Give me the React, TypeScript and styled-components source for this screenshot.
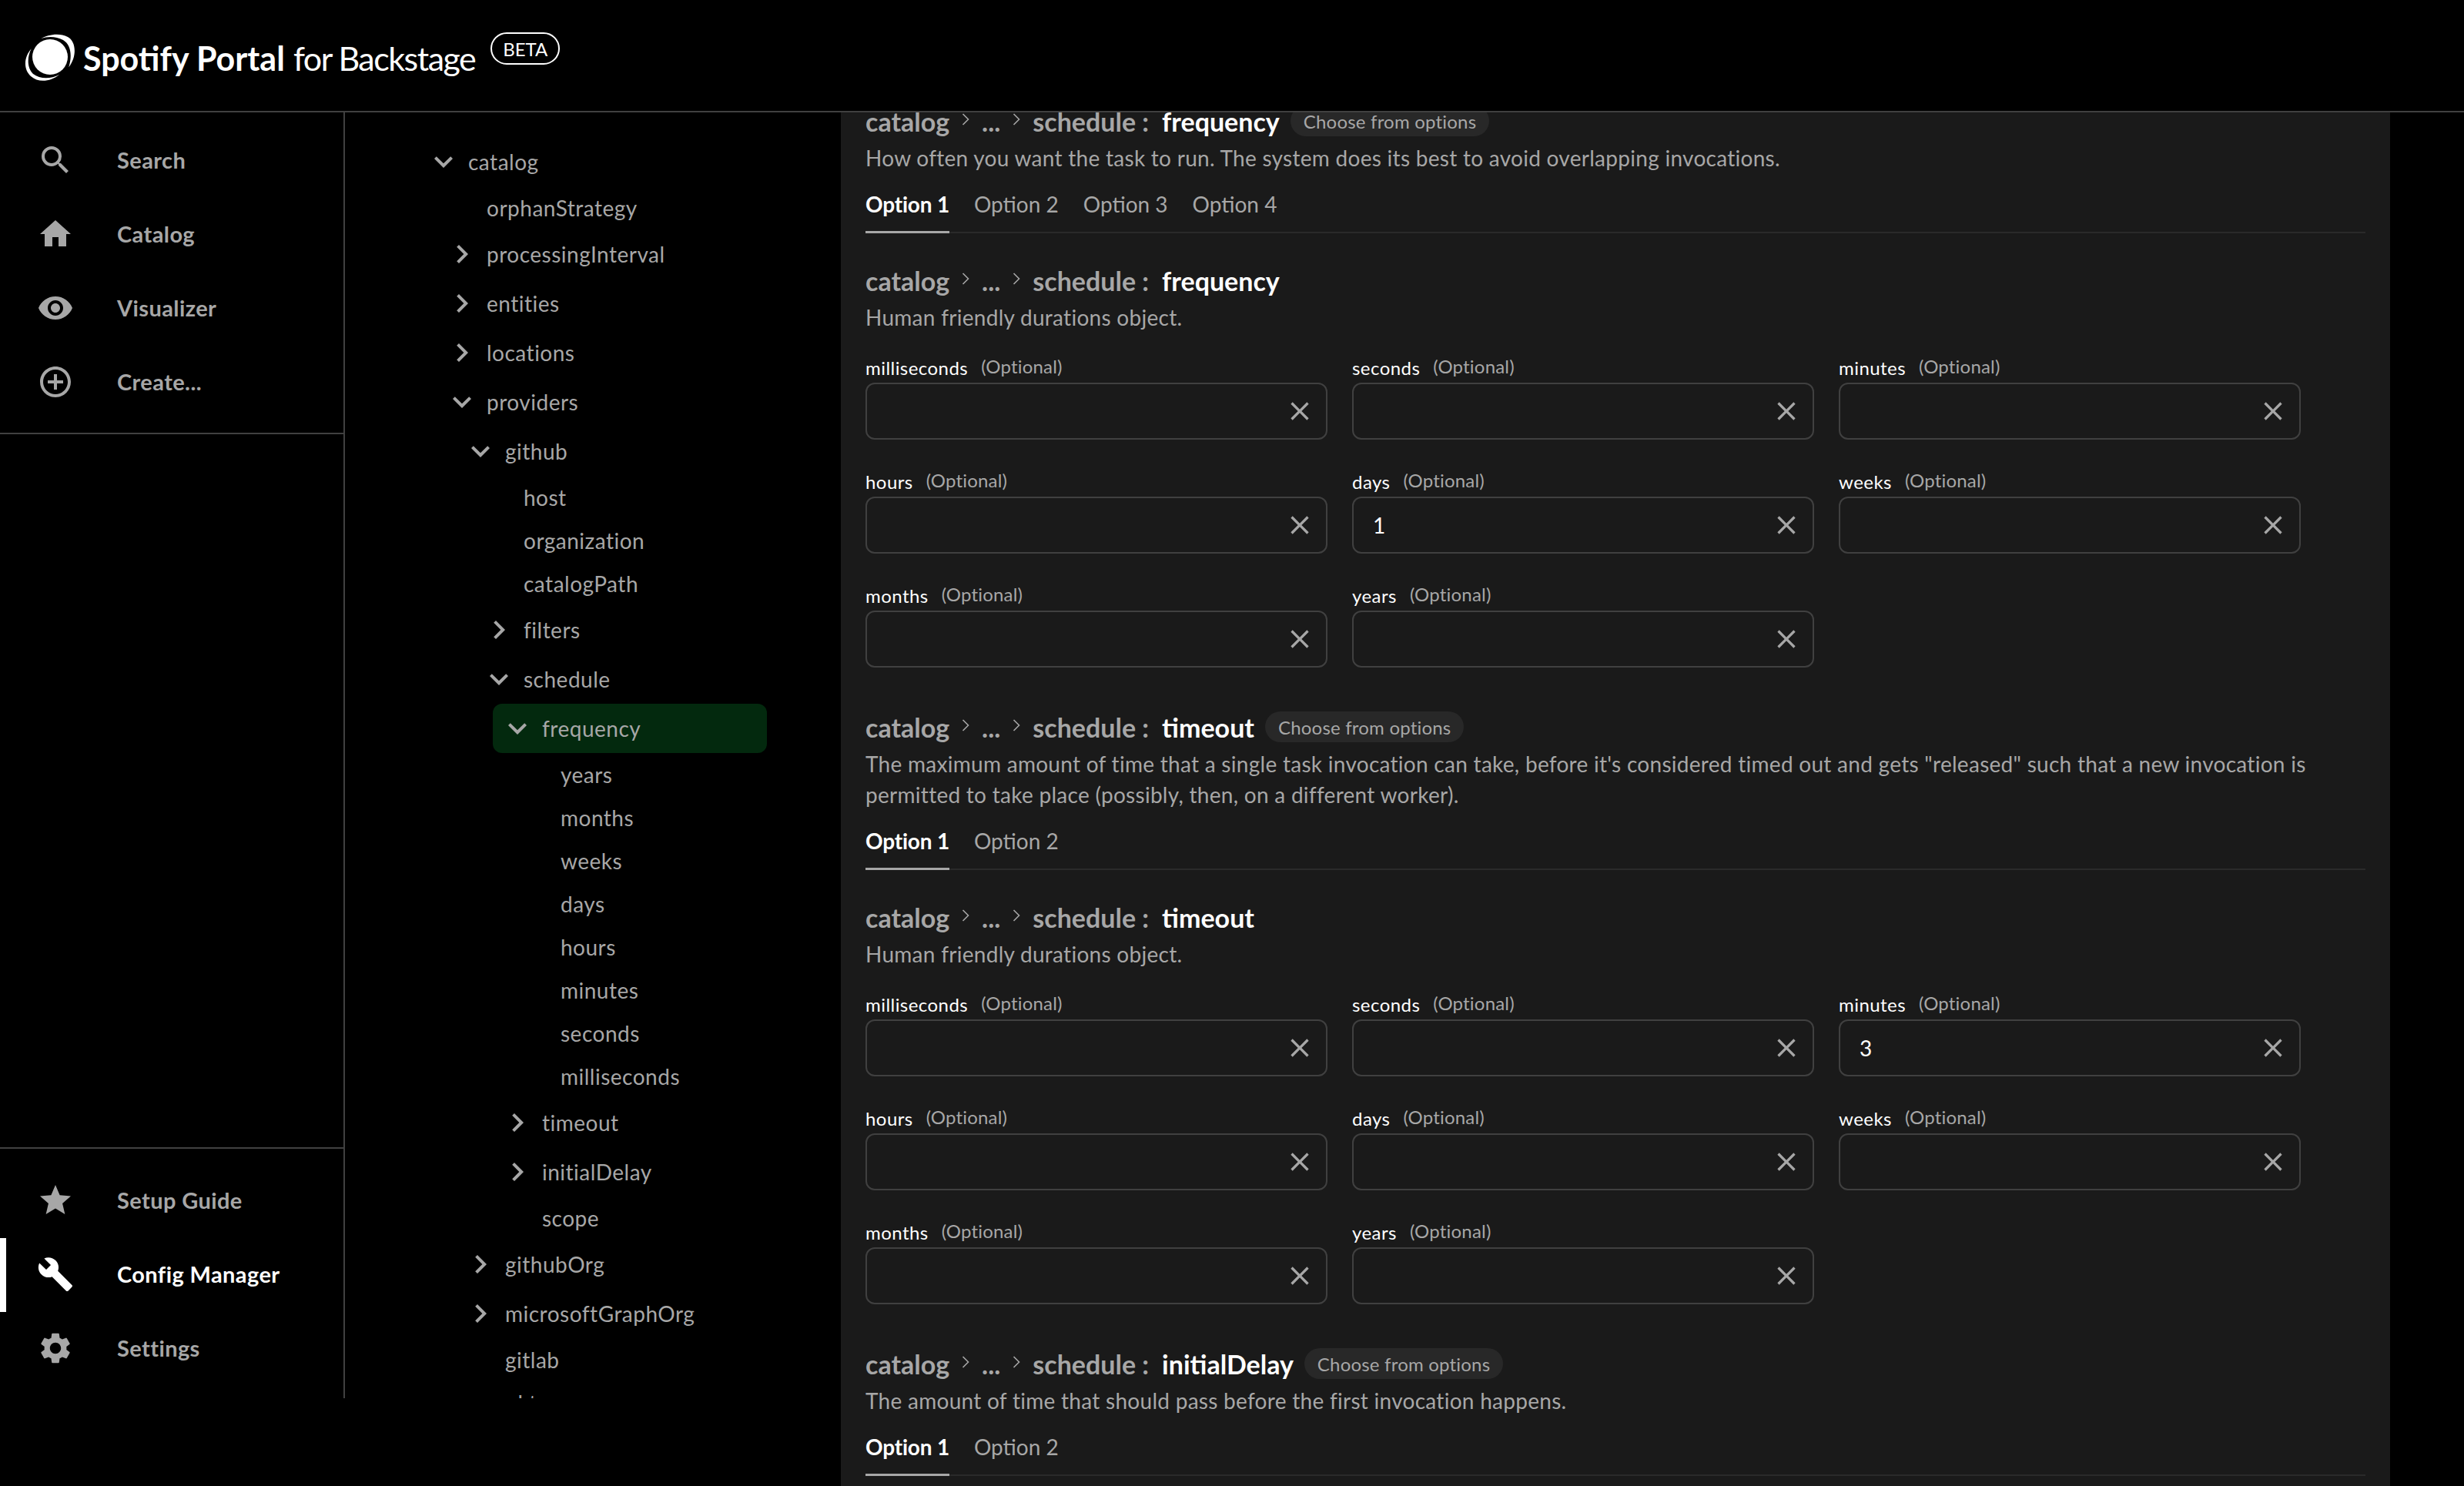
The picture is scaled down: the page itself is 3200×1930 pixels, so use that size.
import React from 'react';
import styled, { createGlobalStyle } from 'styled-components';
import {
  MdAddCircleOutline,
  MdBuild,
  MdChevronRight,
  MdClose,
  MdExpandMore,
  MdHome,
  MdSearch,
  MdSettings,
  MdStar,
  MdVisibility,
} from 'react-icons/md';

const GlobalStyle = createGlobalStyle`
  * {
    box-sizing: border-box;
  }
  html, body {
    margin: 0;
    background: #000;
  }
  body {
    font-family: Lato, "Noto Sans", sans-serif;
    color: #fff;
  }
`;

const Page = styled.div`
  width: 3200px;
  height: 1930px;
  overflow: hidden;
  background: #000;
`;

const Header = styled.header`
  display: flex;
  align-items: flex-start;
  height: 146px;
  padding: 44px 0 0 32px;
  border-bottom: 2px solid #404040;
`;

const LogoText = styled.div`
  margin-left: 10px;
  font-size: 43px;
  line-height: 64px;
  white-space: nowrap;
  strong {
    font-weight: 700;
  }
`;

const LogoLight = styled.span`
  letter-spacing: -1.5px;
`;

const BetaBadge = styled.div`
  display: flex;
  align-items: center;
  justify-content: center;
  width: 90px;
  height: 42px;
  margin: -2px 0 0 20px;
  border: 2px solid #fff;
  border-radius: 21px;
  font-size: 24px;
`;

const Body = styled.div`
  display: flex;
  align-items: flex-start;
`;

const Sidebar = styled.nav`
  display: flex;
  flex-direction: column;
  justify-content: space-between;
  flex: none;
  width: 448px;
  height: 1670px;
  border-right: 2px solid #404040;
`;

const NavGroup = styled.div<{ $top?: boolean }>`
  padding: ${({ $top }) => ($top ? '15px 0 17px' : '20px 0 16px')};
  border-${({ $top }) => ($top ? 'bottom' : 'top')}: 2px solid #404040;
`;

const NavItem = styled.div<{ $active?: boolean }>`
  display: flex;
  align-items: center;
  height: 96px;
  padding: 0 0 2px 48px;
  border-left: 8px solid ${({ $active }) => ($active ? '#fff' : 'transparent')};
  color: ${({ $active }) => ($active ? '#fff' : '#a7a7a7')};
  font-size: 29px;
  font-weight: 700;
  letter-spacing: 0.4px;
  svg {
    flex: none;
    width: 48px;
    height: 48px;
    margin-left: -8px;
    margin-right: 56px;
  }
`;

const NavLabel = styled.span`
  margin-top: -2px;
`;

const Tree = styled.div`
  flex: none;
  width: 644px;
  height: 1670px;
  overflow: hidden;
  padding: 32px 96px 0;
`;

const TreeRow = styled.div<{ $depth: number; $leaf?: boolean; $selected?: boolean }>`
  display: flex;
  align-items: center;
  height: ${({ $leaf }) => ($leaf ? 56 : 64)}px;
  margin-left: ${({ $depth }) => $depth * 24}px;
  padding-left: ${({ $leaf }) => ($leaf ? 64 : 8)}px;
  border-radius: 12px;
  background: ${({ $selected }) => ($selected ? '#03290e' : 'transparent')};
  color: #a7a7a7;
  font-size: 28px;
  letter-spacing: 0.5px;
  svg {
    flex: none;
    width: 48px;
    height: 48px;
    margin-right: 8px;
  }
`;

const Main = styled.main`
  flex: none;
  width: 2012px;
  height: 1784px;
  overflow: hidden;
  padding: 0 32px;
  background: #1a1a1a;
`;

const ScrolledContent = styled.div`
  margin-top: -9px;
`;

const Heading = styled.div`
  display: flex;
  align-items: center;
  height: 40px;
  color: #a7a7a7;
  font-size: 34px;
  font-weight: 700;
  white-space: nowrap;
`;

const Crumb = styled.svg`
  width: 10px;
  height: 16px;
  margin: -4px 16px 0;
`;

const Current = styled.span`
  margin-left: 17px;
  color: #fff;
`;

const Pill = styled.span`
  display: flex;
  align-items: center;
  height: 40px;
  margin-left: 14px;
  padding: 0 17px;
  border-radius: 20px;
  background: #282828;
  color: #a7a7a7;
  font-size: 24px;
  font-weight: 400;
  letter-spacing: 0.2px;
`;

const Description = styled.p`
  margin: 8px 0 0;
  color: #a7a7a7;
  font-size: 28px;
  line-height: 40px;
  letter-spacing: 0.28px;
`;

const TabBar = styled.div`
  display: flex;
  gap: 32px;
  margin: 20px 0 41px;
  border-bottom: 2px solid #2a2a2a;
`;

const Tab = styled.div<{ $active?: boolean }>`
  height: 58px;
  margin-bottom: -2px;
  padding-bottom: 16px;
  border-bottom: 3px solid ${({ $active }) => ($active ? '#a7a7a7' : 'transparent')};
  color: ${({ $active }) => ($active ? '#fff' : '#a7a7a7')};
  font-size: 28px;
  font-weight: ${({ $active }) => ($active ? 700 : 400)};
  line-height: 40px;
  letter-spacing: ${({ $active }) => ($active ? '-0.2px' : '0')};
`;

const FieldGrid = styled.div`
  display: grid;
  grid-template-columns: repeat(3, 600px);
  gap: 34px 32px;
  margin: 25px 0 57px;
`;

const LabelRow = styled.div`
  display: flex;
  align-items: center;
  gap: 17px;
  height: 40px;
  font-size: 24px;
  letter-spacing: 0.45px;
`;

const Optional = styled.span`
  margin-top: -3px;
  color: #a7a7a7;
  letter-spacing: 0.2px;
`;

const InputBox = styled.div`
  display: flex;
  align-items: center;
  height: 74px;
  padding: 0 14px 0 25px;
  border: 2px solid #404040;
  border-radius: 12px;
  svg {
    flex: none;
    width: 40px;
    height: 40px;
    color: #a7a7a7;
  }
`;

const TextInput = styled.input`
  flex: 1;
  min-width: 0;
  padding: 0;
  border: 0;
  outline: 0;
  background: transparent;
  color: #fff;
  font: 400 28px Lato, "Noto Sans", sans-serif;
`;

const Logo = () => (
  <svg width="66" height="62" viewBox="0 0 66 62" fill="#fff">
    <circle cx="33" cy="30" r="23" />
    <path d="M21.3 6C30 1 45-2 56 4c10 5 13 24 1.300 39.300C62 28 60 14 50 8 41 3 30 3 21.300 6z" />
    <path d="M8.700 19.300C-1 30-2 46 8 55c10 9 26 7 37.300-2.300C34 59 20 59 11 52 3 44 3 30 8.700 19.300z" />
  </svg>
);

const CrumbChevron = () => (
  <Crumb viewBox="0 0 10 16" fill="none" stroke="#a7a7a7" strokeWidth="1.600">
    <path d="M1.500 1l7 7-7 7" />
  </Crumb>
);

type FieldProps = { name: string; value?: string };

const Field = ({ name, value }: FieldProps) => (
  <div>
    <LabelRow>
      {name}
      <Optional>(Optional)</Optional>
    </LabelRow>
    <InputBox>
      <TextInput readOnly defaultValue={value} />
      <MdClose />
    </InputBox>
  </div>
);

const durations = ['milliseconds', 'seconds', 'minutes', 'hours', 'days', 'weeks', 'months', 'years'];

const Durations = ({ values }: { values: Record<string, string> }) => (
  <FieldGrid>
    {durations.map((name) => (
      <Field key={name} name={name} value={values[name]} />
    ))}
  </FieldGrid>
);

const SectionHeading = ({ name, pill }: { name: string; pill?: boolean }) => (
  <Heading>
    catalog
    <CrumbChevron />
    ...
    <CrumbChevron />
    schedule :<Current>{name}</Current>
    {pill && <Pill>Choose from options</Pill>}
  </Heading>
);

const Tabs = ({ count }: { count: number }) => (
  <TabBar>
    {Array.from({ length: count }, (_, i) => (
      <Tab key={i} $active={i === 0}>
        Option {i + 1}
      </Tab>
    ))}
  </TabBar>
);

type TreeItem = [string, number, 'open' | 'closed' | 'leaf', boolean?];

const treeItems: TreeItem[] = [
  ['catalog', 0, 'open'],
  ['orphanStrategy', 1, 'leaf'],
  ['processingInterval', 1, 'closed'],
  ['entities', 1, 'closed'],
  ['locations', 1, 'closed'],
  ['providers', 1, 'open'],
  ['github', 2, 'open'],
  ['host', 3, 'leaf'],
  ['organization', 3, 'leaf'],
  ['catalogPath', 3, 'leaf'],
  ['filters', 3, 'closed'],
  ['schedule', 3, 'open'],
  ['frequency', 4, 'open', true],
  ['years', 5, 'leaf'],
  ['months', 5, 'leaf'],
  ['weeks', 5, 'leaf'],
  ['days', 5, 'leaf'],
  ['hours', 5, 'leaf'],
  ['minutes', 5, 'leaf'],
  ['seconds', 5, 'leaf'],
  ['milliseconds', 5, 'leaf'],
  ['timeout', 4, 'closed'],
  ['initialDelay', 4, 'closed'],
  ['scope', 4, 'leaf'],
  ['githubOrg', 2, 'closed'],
  ['microsoftGraphOrg', 2, 'closed'],
  ['gitlab', 2, 'leaf'],
  ['okta', 2, 'leaf'],
];

const App = () => (
  <Page>
    <GlobalStyle />
    <Header>
      <Logo />
      <LogoText>
        <strong>Spotify Portal</strong> <LogoLight>for Backstage</LogoLight>
      </LogoText>
      <BetaBadge>BETA</BetaBadge>
    </Header>
    <Body>
      <Sidebar>
        <NavGroup $top>
          <NavItem><MdSearch /><NavLabel>Search</NavLabel></NavItem>
          <NavItem><MdHome /><NavLabel>Catalog</NavLabel></NavItem>
          <NavItem><MdVisibility /><NavLabel>Visualizer</NavLabel></NavItem>
          <NavItem><MdAddCircleOutline /><NavLabel>Create...</NavLabel></NavItem>
        </NavGroup>
        <NavGroup>
          <NavItem><MdStar /><NavLabel>Setup Guide</NavLabel></NavItem>
          <NavItem $active><MdBuild /><NavLabel>Config Manager</NavLabel></NavItem>
          <NavItem><MdSettings /><NavLabel>Settings</NavLabel></NavItem>
        </NavGroup>
      </Sidebar>
      <Tree>
        {treeItems.map(([name, depth, kind, selected]) => (
          <TreeRow key={name + depth} $depth={depth} $leaf={kind === 'leaf'} $selected={selected}>
            {kind === 'open' && <MdExpandMore />}
            {kind === 'closed' && <MdChevronRight />}
            {name}
          </TreeRow>
        ))}
      </Tree>
      <Main>
        <ScrolledContent>
          <SectionHeading name="frequency" pill />
          <Description>
            How often you want the task to run. The system does its best to avoid overlapping invocations.
          </Description>
          <Tabs count={4} />
          <SectionHeading name="frequency" />
          <Description>Human friendly durations object.</Description>
          <Durations values={{ days: '1' }} />
          <SectionHeading name="timeout" pill />
          <Description>
            The maximum amount of time that a single task invocation can take, before it's considered timed out and
            gets "released" such that a new invocation is permitted to take place (possibly, then, on a different
            worker).
          </Description>
          <Tabs count={2} />
          <SectionHeading name="timeout" />
          <Description>Human friendly durations object.</Description>
          <Durations values={{ minutes: '3' }} />
          <SectionHeading name="initialDelay" pill />
          <Description>The amount of time that should pass before the first invocation happens.</Description>
          <Tabs count={2} />
        </ScrolledContent>
      </Main>
    </Body>
  </Page>
);

export default App;
